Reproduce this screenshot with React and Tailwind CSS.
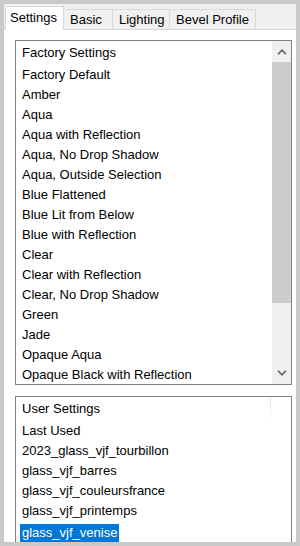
const factory = [
  "Factory Default",
  "Amber",
  "Aqua",
  "Aqua with Reflection",
  "Aqua, No Drop Shadow",
  "Aqua, Outside Selection",
  "Blue Flattened",
  "Blue Lit from Below",
  "Blue with Reflection",
  "Clear",
  "Clear with Reflection",
  "Clear, No Drop Shadow",
  "Green",
  "Jade",
  "Opaque Aqua",
  "Opaque Black with Reflection",
];

const userSettings = [
  "Last Used",
  "2023_glass_vjf_tourbillon",
  "glass_vjf_barres",
  "glass_vjf_couleursfrance",
  "glass_vjf_printemps",
  "glass_vjf_venise",
];

const tabs = [
  { label: "Settings", w: "w-[59px]", active: true },
  { label: "Basic", w: "w-[49px]" },
  { label: "Lighting", w: "w-[57px]" },
  { label: "Bevel Profile", w: "w-[86px]" },
];

function Chevron({ up }) {
  return (
    <svg width="10" height="6" viewBox="0 0 10 6">
      <polyline
        points={up ? "1,5.2 5,1.2 9,5.2" : "1,0.8 5,4.8 9,0.8"}
        fill="none"
        stroke="#606060"
        strokeWidth="1.6"
      />
    </svg>
  );
}

/* ── TAB STRIP ── */
function Tabs() {
  return (
    <div className="h-[25px] flex items-end pl-[1px] shrink-0">
      {tabs.map((t) =>
        t.active ? (
          <div
            key={t.label}
            className={`${t.w} h-[24px] -mb-px relative z-10 bg-white border border-b-0 border-[#d9d9d9] pl-[4px] pt-[1px] leading-[20px]`}
          >
            {t.label}
          </div>
        ) : (
          <div
            key={t.label}
            className={`${t.w} h-[20px] bg-[#f0f0f0] border-t border-r border-[#d9d9d9] pl-[6px] leading-[20px]`}
          >
            {t.label}
          </div>
        )
      )}
    </div>
  );
}

export default function App() {
  return (
    <div
      className="w-[300px] h-[546px] overflow-hidden border-4 border-[#c9c9c9] bg-[#f0f0f0] flex flex-col text-[13px] text-black"
      style={{ fontFamily: '"Liberation Sans", Arial, sans-serif' }}
    >
      <Tabs />

      {/* ── PANEL ── */}
      <div className="flex-1 bg-white border-t border-[#d9d9d9] pt-[10px] pl-[11px] pr-[4px] flex flex-col gap-[11px] min-h-0">
        {/* Factory list */}
        <div className="h-[345px] shrink-0 border border-[#828282] flex overflow-hidden">
          <div className="flex-1 min-w-0 px-[4px] pt-[2px]">
            <div className="h-[22px] leading-[20px] pl-[2px]">Factory Settings</div>
            {factory.map((f) => (
              <div key={f} className="h-[20px] leading-[20px] pl-[2px] whitespace-nowrap">
                {f}
              </div>
            ))}
          </div>
          <div className="w-[19px] bg-[#f0f0f0] flex flex-col shrink-0">
            <div className="h-[21px] flex items-center justify-center pt-[1px]">
              <Chevron up />
            </div>
            <div className="h-[241px] bg-[#cdcdcd]" />
            <div className="flex-1" />
            <div className="h-[21px] flex items-center justify-center pb-[1px]">
              <Chevron />
            </div>
          </div>
        </div>

        {/* User list */}
        <div className="h-[160px] shrink-0 border border-[#828282] relative overflow-hidden">
          <div className="absolute top-0 left-[254px] w-px h-[28px] bg-gradient-to-b from-[#e3e3e3] to-transparent" />
          <div className="px-[4px] pt-[2px]">
            <div className="h-[22px] leading-[20px] pl-[2px]">User Settings</div>
            {userSettings.map((u, i) =>
              i === userSettings.length - 1 ? (
                <div key={u} className="h-[20px] pt-[2px]">
                  <span className="inline-block bg-[#0078d7] text-white px-[2px] leading-[18px]">
                    {u}
                  </span>
                </div>
              ) : (
                <div key={u} className="h-[20px] leading-[20px] pl-[2px] whitespace-nowrap">
                  {u}
                </div>
              )
            )}
          </div>
        </div>
      </div>
    </div>
  );
}
